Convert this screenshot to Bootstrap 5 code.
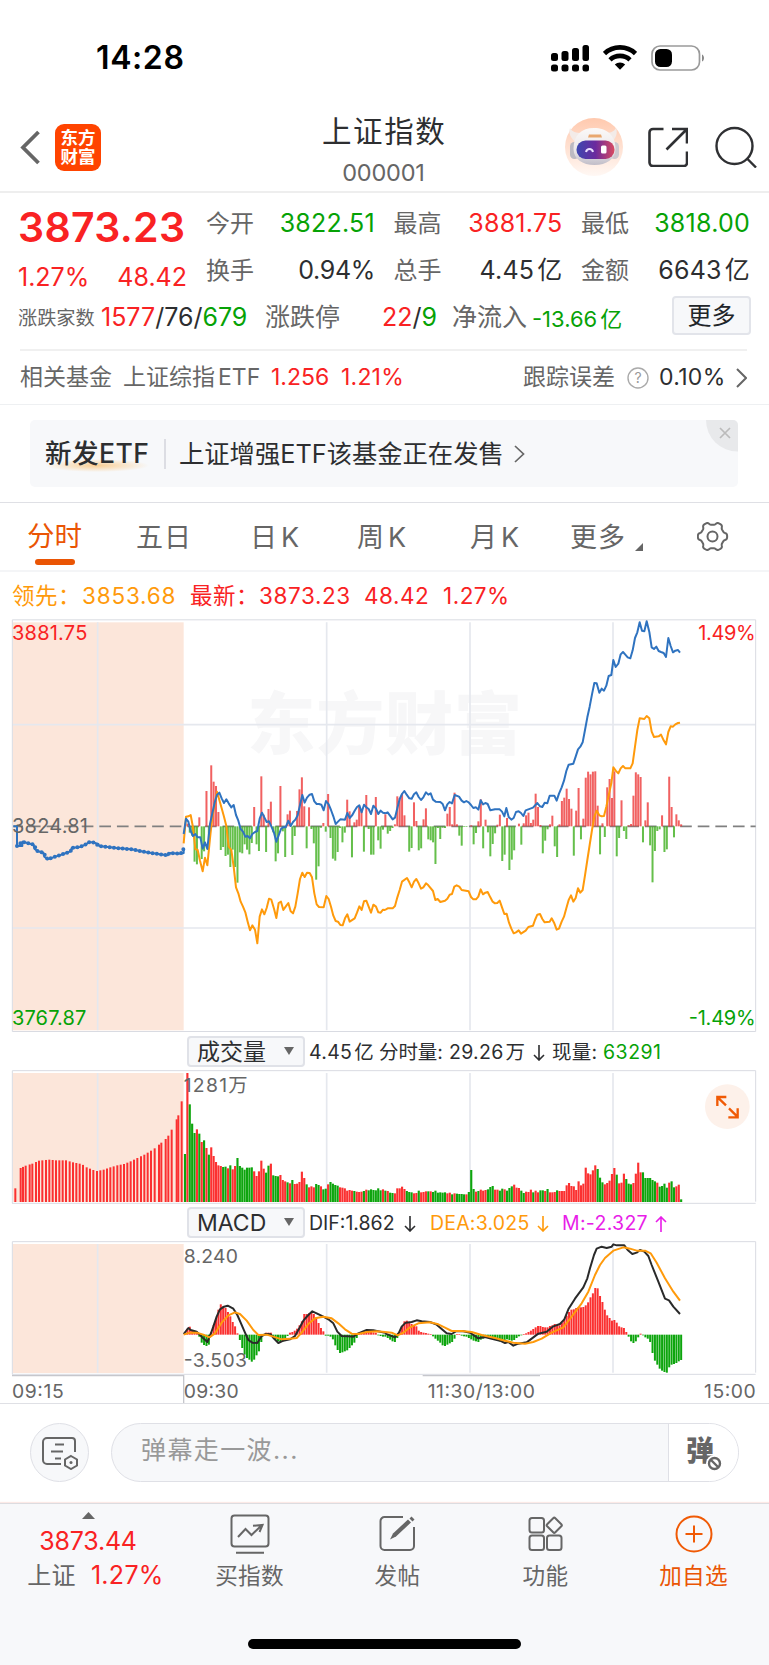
<!DOCTYPE html>
<html lang="zh-CN">
<head>
<meta charset="utf-8">
<meta name="viewport" content="width=device-width, initial-scale=1">
<title>上证指数 000001</title>
<link href="https://cdn.jsdelivr.net/npm/bootstrap@5.3.0/dist/css/bootstrap.min.css" rel="stylesheet">
<style>
:root{--up:#f92223;--down:#06a206;--ink:#2d2e30;--mute:#666;--brand:#ea5504;--amber:#ff9a0b;--line:#e3e5ea;--soft:#f7f8fa}
body{font-family:Inter,"Noto Sans CJK SC",sans-serif;width:769px;margin:0;background:#fff;color:var(--ink);line-height:1;overflow-x:hidden}
svg{display:block;flex:none}
.up{color:var(--up)}.down{color:var(--down)}.mute{color:var(--mute)}.amber{color:var(--amber)}.brand{color:var(--brand)}
.d-flex>span,.cells>span{white-space:nowrap;flex:none}
.cells{display:grid;align-items:center}
.unit{margin-left:3px}
.statusbar{height:110px;padding:5px 64px 0 96px}
.clock{font-size:32px;font-weight:600;color:#000;letter-spacing:.6px}
.titlebar{height:83px;border-bottom:2px solid #eee;padding:0 12px 7px 20px}
.logo{width:46px;height:47px;border-radius:9px;background:#ff4400;color:#fff;font-weight:700;font-size:17.5px;line-height:19px;text-align:center;padding-top:4.500px;margin-left:14px}
.names{width:300px;margin-left:133px;margin-right:31px;gap:14px;padding-top:7px}
.ttl{font-size:29.5px;letter-spacing:1.6px;margin-right:-1.6px}
.code{font-size:23.5px;letter-spacing:-.2px}
.quote{height:156px;padding:7px 18px 0}
.big{font-size:41px;font-weight:600;letter-spacing:.3px}
.n25{font-size:25px}
.wide{letter-spacing:.25px}
.pairs{grid-template-columns:169px 169px 169px;column-gap:18.5px;grid-auto-rows:47px}
.pair{font-size:24px}
.third{height:47px;grid-template-columns:83px 164px 117px 70px 80px 140px 79px}
.morebtn{height:39px;width:79px;border:2px solid #e2e4ea;border-radius:4px;background:var(--soft);font-size:24px;line-height:1;position:relative;top:-2px}
.fund{height:55px;border-top:2px solid #f0f0f0;margin:0 22px 0 20px;font-size:23px;grid-template-columns:103px 148px 70px 182px 104px 32px 77px 10px}
.adwrap{border-top:1px solid #eef0f2;border-bottom:1px solid #dfe0e5;height:99px;padding:15px 31px 0 30px}
.ad{height:67px;border-radius:5px;background:var(--soft);padding-left:15px;font-size:25.3px;overflow:hidden}
.adtag{position:relative;width:119px;font-size:26.6px;font-weight:500;letter-spacing:.4px}
.adtag i{position:absolute;left:0;top:19px;width:104px;height:13px;background:radial-gradient(closest-side,#fbc47acc,#fbc47a00)}
.tabrow{height:69px;border-bottom:2px solid #f4f5f7;font-size:27px;letter-spacing:1px;grid-template-columns:109px 114px 107px 113px 100px 65px 60px;padding:1px 0 0 27px}
.tabrow .k{margin-left:3px}
.tabrow .active::after{content:"";position:absolute;left:8px;top:36px;width:40px;height:6px;border-radius:3px;background:var(--brand)}
.legend-row{height:47px;padding:2px 0 0 12px;font-size:22.5px;letter-spacing:.5px;grid-template-columns:70px 108px 69px 105px 79px 70px}
.sub{height:38px;padding-left:187px;font-size:19.5px}
.pick{width:118px;height:31px;border:2px solid #e0e2e8;border-radius:4px;background:var(--soft);font-size:23px;padding:2px 9px 0 8px}
.sub .cells{padding-top:3px}
.caret{width:0;height:0;border:5px solid transparent;border-top:8px solid #666;border-bottom:0;margin-top:-3px}
.axis{height:29px;border-bottom:1px solid #dfe0e5}
.say{height:99px;padding:0 30px 2px}
.round{width:59px;height:59px;border:1px solid #dfe0e6;border-radius:50%;background:var(--soft)}
.pill{height:59px;width:628px;border:1px solid #dfe0e6;border-radius:30px;background:var(--soft);overflow:hidden;margin-left:22px}
.pill .txt{width:557px;padding:0 0 4px 29px;font-size:25px;color:#999;letter-spacing:1.4px}
.pill .tog{background:#fff;border-left:1px solid #dfe0e6;height:100%;width:70px;padding:0 0 4px 17px}
.dock{height:163px;background:var(--soft);border-top:1px solid #dcdce0;box-shadow:0 -1px 1px #fbe9e6;font-size:22.6px;letter-spacing:.3px;position:relative;grid-template-columns:176px 147px 149px 147px 149px}
.dockitem{height:100px}
.home{position:absolute;left:248px;top:135px;width:273px;height:10px;border-radius:5px;background:#000}
svg text{font-family:Inter,"Noto Sans CJK SC",sans-serif}
</style>
</head>
<body>
<header>
  <div class="statusbar d-flex align-items-center">
    <span class="clock me-auto">14:28</span>
    <svg width="39" height="28" viewBox="0 0 39 28"><g><rect x="0" y="9" width="7" height="8" rx="2.5"/><rect x="10.5" y="7" width="7" height="10" rx="2.5"/><rect x="21" y="4" width="7" height="13" rx="2.5"/><rect x="31.500" y="1" width="6.500" height="16" rx="2.500"/><rect x="0" y="20.500" width="7" height="7" rx="2.500"/><rect x="10.500" y="20.500" width="7" height="7" rx="2.500"/><rect x="21" y="20.500" width="7" height="7" rx="2.500"/><rect x="31.500" y="20.500" width="6.500" height="7" rx="2.500"/></g></svg>
    <svg style="margin-left:13px;margin-right:14px" width="34" height="25" viewBox="0 0 34 25"><g fill="none" stroke="#000" stroke-width="4.600"><path d="M1.500 8.500C10 .300 24 .300 32.500 8.500"/><path d="M7 14.800c5.500-5.300 14.500-5.300 20 0"/></g><path d="M11.800 19.500c2.700-2.800 7.700-2.800 10.400 0L17 24.800z"/></svg>
    <svg width="54" height="26" viewBox="0 0 54 26"><rect x="1" y="1" width="47.500" height="24" rx="8" fill="none" stroke="#9a9a9a" stroke-width="1.700"/><rect x="4" y="4" width="17" height="18" rx="5.500"/><path d="M51 9.500c2.700 1 2.700 6 0 7z" fill="#888"/></svg>
  </div>
  <div class="titlebar d-flex align-items-center">
    <svg width="21" height="36" viewBox="0 0 21 36" fill="none" stroke="#666" stroke-width="3.800"><path d="M18.500 3 3 18.500 18.500 34"/></svg>
    <div class="logo">东方<br>财富</div>
    <div class="names d-flex flex-column align-items-center">
      <span class="ttl">上证指数</span><span class="code mute">000001</span>
    </div>
    <svg width="60" height="60" viewBox="0 0 60 60">
      <defs><linearGradient id="halo" x2="0" y2="1"><stop stop-color="#ffc9ae"/><stop offset="1" stop-color="#fff8f4"/></linearGradient><linearGradient id="visor"><stop stop-color="#3d48b0"/><stop offset=".5" stop-color="#6b2a9e"/><stop offset="1" stop-color="#d94a60"/></linearGradient><linearGradient id="shell" x2="0" y2="1"><stop stop-color="#fbf9f8"/><stop offset=".6" stop-color="#ece8ea"/><stop offset="1" stop-color="#c0bdc8"/></linearGradient></defs>
      <circle cx="30" cy="30" r="29" fill="url(#halo)"/><path d="M6 11c2 4 6 5 12 5l-6 9c-5-3-8-9-6-14zM52 11c-2 4-6 5-11 5l6 9c5-3 7-9 5-14z" fill="#f3ebe8"/>
      <rect x="6" y="25" width="9" height="17" rx="4.500" fill="#bcbac2"/><rect x="46" y="25" width="9" height="17" rx="4.500" fill="#cdc8cf"/>
      <path d="M9.500 32c0-14 8-21 20.500-21s21.500 7 21.500 21c0 10-9 16-21 16s-21-6-21-16z" fill="url(#shell)"/><path d="M25 17.500h12l1 3H24z" fill="#e9a76f"/>
      <rect x="12.500" y="23.500" width="38" height="18.500" rx="9" fill="url(#visor)"/><path d="M22 35c1-4 6-4 7 0" fill="none" stroke="#eadfff" stroke-width="2"/><rect x="37" y="28.500" width="5.500" height="8" rx="1.500" fill="#fff"/>
    </svg>
    <svg style="margin-left:24px" width="40" height="40" viewBox="0 0 40 40" fill="none" stroke="#2f3033" stroke-width="2.600"><path d="M15.500 2H5a3.500 3.500 0 0 0-3.500 3.500v30A3.500 3.500 0 0 0 5 39h31a3 3 0 0 0 3-3V24.500M24 2h15v14.500M39 2 18.500 22.500"/></svg>
    <svg style="margin-left:27px" width="42" height="42" viewBox="0 0 42 42" fill="none" stroke="#2f3033" stroke-width="2.400"><circle cx="19.500" cy="20" r="18"/><path d="M31.500 32 41 41.500"/></svg>
  </div>
</header>

<section class="quote">
  <div class="d-flex">
    <div style="width:188px">
      <div class="big up d-flex align-items-center" style="height:54px"><span>3873.23</span></div>
      <div class="d-flex justify-content-between n25 up align-items-center" style="height:47px;width:169px"><span>1.27%</span><span>48.42</span></div>
    </div>
    <div class="cells pairs">
      <div class="pair d-flex justify-content-between align-items-center"><span class="mute">今开</span><span class="n25 wide down">3822.51</span></div>
      <div class="pair d-flex justify-content-between align-items-center"><span class="mute">最高</span><span class="n25 wide up">3881.75</span></div>
      <div class="pair d-flex justify-content-between align-items-center"><span class="mute">最低</span><span class="n25 wide down">3818.00</span></div>
      <div class="pair d-flex justify-content-between align-items-center"><span class="mute">换手</span><span class="n25" style="letter-spacing:-.3px">0.94%</span></div>
      <div class="pair d-flex justify-content-between align-items-center"><span class="mute">总手</span><span class="n25 wide">4.45<span class="unit">亿</span></span></div>
      <div class="pair d-flex justify-content-between align-items-center"><span class="mute">金额</span><span class="n25 wide">6643<span class="unit">亿</span></span></div>
    </div>
  </div>
  <div class="cells third" style="margin-top:-7px">
    <span class="mute" style="font-size:19.2px;padding-top:3px">涨跌家数</span>
    <span class="n25"><span class="up">1577</span>/76/<span class="down">679</span></span>
    <span class="mute" style="font-size:25px">涨跌停</span>
    <span class="n25"><span class="up">22</span>/<span class="down">9</span></span>
    <span class="mute" style="font-size:25px">净流入</span>
    <span class="down" style="font-size:22px;padding-top:3px">-13.66<span class="unit">亿</span></span>
    <button class="btn p-0 morebtn">更多</button>
  </div>
</section>

<section class="cells fund">
  <span class="mute">相关基金</span><span class="mute">上证综指<span style="margin-left:3px">ETF</span></span><span class="up">1.256</span><span class="up" style="letter-spacing:.2px">1.21%</span><span class="mute">跟踪误差</span>
  <svg width="22" height="22" viewBox="0 0 22 22"><circle cx="11" cy="11" r="10" fill="none" stroke="#aaa" stroke-width="1.400"/><text x="11" y="16" font-size="14" text-anchor="middle" fill="#999">?</text></svg>
  <span style="letter-spacing:.3px">0.10%</span>
  <svg width="11" height="20" viewBox="0 0 11 20" fill="none" stroke="#666" stroke-width="2"><path d="m1 1 9 9-9 9"/></svg>
</section>

<section class="adwrap">
  <div class="ad d-flex align-items-center position-relative">
    <div class="adtag"><i></i><span class="position-relative">新发ETF</span></div>
    <div style="width:2px;height:30px;background:#dcdde3;margin-right:13px"></div>
    <span>上证增强ETF该基金正在发售</span>
    <svg style="margin-left:10px" width="11" height="18" viewBox="0 0 11 18" fill="none" stroke="#666" stroke-width="1.700"><path d="m1 1 8.500 8L1 17"/></svg>
    <svg class="position-absolute top-0 end-0" width="32" height="32" viewBox="0 0 32 32"><path d="M0 0h32v31.500A31.500 31.500 0 0 1 0 0z" fill="#e8e9eb"/><path d="m14 8 10 10m0-10L14 18" stroke="#bbb" stroke-width="1.700"/></svg>
  </div>
</section>

<nav class="cells tabrow mute position-relative">
  <span class="active brand position-relative" style="font-size:27.5px;letter-spacing:0">分时</span><span>五日</span><span>日<span class="k">K</span></span><span>周<span class="k">K</span></span><span>月<span class="k">K</span></span><span>更多</span>
  <svg width="8" height="8" style="margin-top:20px" viewBox="0 0 8 8"><path d="M8 0v8H0z" fill="#666"/></svg>
  <svg class="position-absolute" style="left:697px;top:18px" width="32" height="31" viewBox="0 0 32 31" fill="none" stroke="#666" stroke-width="2"><circle cx="15.500" cy="15.500" r="5"/><path id="gear" stroke-linejoin="round"/></svg>
</nav>

<section class="cells legend-row up">
  <span class="amber">领先：</span><span class="amber" style="letter-spacing:.8px">3853.68</span><span>最新：</span><span style="letter-spacing:.6px">3873.23</span><span>48.42</span><span>1.27%</span>
</section>

<svg id="price" width="769" height="413" viewBox="0 0 2307 1239">
  <text x="742" y="391" font-size="204" font-weight="900" fill="#f7f7f8" textLength="824">东方财富</text>
  <rect x="38" y="10" width="513" height="1224" fill="#fce6da"/>
  <g stroke="#e5e8ee" stroke-width="5" fill="none"><path d="M293 10V1234M980 10V1234M1410 10V1234M1839 10V1234M38 317H2266M38 927H2266"/></g>
  <path d="M37 2.500H2267V1237.500H37z" fill="none" stroke="#d9dbe2" stroke-width="3"/>
  <path d="M40 622H2267" stroke="#808080" stroke-width="5" stroke-dasharray="35 17.800" stroke-dashoffset="6"/>
  <g class="bars" transform="translate(0 622)" opacity=".8"></g>
  <g fill="none" stroke-width="6" stroke-linejoin="round">
    <g transform="translate(0 393)">
      <polyline stroke="#2f73c0" points="40,229 51,229 51,288 67,288 67,275 85,280 101,284 103,296 112,303 130,308 133,320 143,328 160,322 190,312 212,304 215,294 240,291 258,283 266,277 280,277 295,282 298,288 350,294 395,298 430,305 480,313 503,316 508,309 542,311 551,309 551,296"/>
      <polyline stroke="#2f73c0" stroke-width="12" stroke-linecap="round" stroke-dasharray="0 13" points="51,288 67,275 85,280 101,284 112,303 130,308 143,328 160,322 190,312 212,304 215,294 240,291 258,283 266,277 280,277 298,288 350,294 395,298 430,305 480,313 503,316 508,309 542,311 551,296"/>
      <polyline stroke="#ff9a0b" points="551,280 558,200 565,199 572,195 579,232 586,297 593,300 600,332 608,364 615,323 622,346 630,265 637,200 644,165 651,125 658,150 665,175 672,200 679,228 686,290 694,300 701,350 708,412 715,430 722,455 729,470 736,487 743,515 750,541 757,526 765,539 772,580 779,500 786,478 793,493 800,474 807,446 814,449 822,476 829,504 836,459 843,455 850,480 857,470 865,459 872,484 879,490 886,470 893,430 900,387 907,368 914,381 921,368 929,369 936,382 943,430 950,463 957,471 971,472 979,438 986,447 993,470 1000,497 1007,513 1014,515 1021,525 1028,526 1035,505 1042,493 1049,515 1064,505 1071,488 1078,469 1085,480 1092,454 1099,452 1106,470 1113,488 1120,464 1128,470 1135,487 1142,488 1149,479 1156,480"/>
      <polyline stroke="#2f73c0" points="551,252 558,206 565,215 572,243 579,258 586,252 593,262 601,262 608,296 615,277 622,297 630,222 637,190 644,158 651,134 658,128 665,145 672,159 679,148 686,160 694,172 701,165 708,195 715,212 722,237 729,245 736,260 743,258 750,265 757,252 765,246 772,243 779,206 786,188 793,202 800,216 807,214 814,229 822,248 829,275 836,256 843,237 850,231 857,232 865,212 872,228 879,216 886,209 893,196 900,165 907,135 914,158 921,143 929,134 936,132 943,154 950,162 957,162 964,164 971,181 978,153 986,163 993,180 1000,199 1007,222 1014,215 1021,208 1035,209 1042,189 1049,204 1057,195 1064,182 1071,171 1078,166 1085,187 1092,164 1099,172 1106,177 1113,192 1120,167 1128,176 1135,192 1142,182 1149,188 1156,190"/>
    </g>
    <g transform="translate(1155 -27)">
      <polyline stroke="#ff9a0b" points="0,900 8,895 23,895 30,888 37,862 44,840 51,815 66,804 73,817 80,832 87,815 94,807 101,820 108,836 115,832 123,820 130,826 144,843 151,870 158,867 166,876 180,872 187,866 194,854 201,852 208,830 215,826 223,830 230,840 251,844 258,861 265,868 273,868 280,860 287,838 294,853 301,848 308,846 316,862 323,875 330,880 337,879 344,872 351,892 358,912 365,911 372,938 379,956 386,970 393,967 401,961 408,971 422,962 430,951 444,947 450,930 457,914 465,912 472,927 479,937 494,935 500,925 508,940 515,959 522,956 530,935 537,920 544,895 551,870 558,856 565,875 572,864 579,835 586,848 593,840 600,796 607,750 614,705 621,660 628,620 635,602 643,616 650,619 657,618 664,590 671,556 679,520 685,472 692,482 700,490 707,475 714,468 721,475 736,475 743,460 750,410 757,360 764,325 778,327 785,318 793,325 800,365 807,381 821,379 828,374 836,391 843,403 850,366 857,349 864,350 871,343 879,339 885,338"/>
      <polyline stroke="#2f73c0" points="0,610 8,607 15,617 23,628 30,623 37,595 44,567 51,552 58,543 65,554 73,565 80,566 87,553 94,547 101,561 108,570 115,562 123,547 130,554 137,550 144,569 152,575 166,576 173,582 180,601 187,583 194,576 201,580 209,555 222,560 230,572 237,577 244,573 251,577 258,585 265,594 273,592 280,599 287,571 294,583 301,579 308,582 316,601 330,598 344,598 351,605 358,619 364,594 371,621 379,629 386,624 393,606 401,604 408,609 415,618 422,601 436,596 444,593 457,579 465,589 472,591 479,578 487,580 494,557 508,557 515,572 522,551 530,532 537,512 544,483 551,464 565,461 572,440 579,418 586,410 593,397 600,360 607,322 614,290 621,253 628,219 635,220 643,248 650,236 657,242 664,227 671,198 679,195 685,150 692,171 700,161 707,133 714,126 721,134 728,142 736,145 743,121 750,84 757,67 764,37 771,62 778,64 785,34 793,66 800,112 807,117 814,110 821,123 828,126 836,129 843,141 850,84 857,108 864,127 871,122 879,120 885,128"/>
    </g>
  </g>
  <g font-size="60">
    <text x="36" y="62" fill="#f92223" textLength="226">3881.75</text>
    <text x="36" y="642" fill="#666" textLength="228">3824.81</text>
    <text x="36" y="1218" fill="#06a206" textLength="223">3767.87</text>
    <text x="2095" y="62" fill="#f92223" textLength="172">1.49%</text>
    <text x="2066" y="1218" fill="#06a206" textLength="201">-1.49%</text>
  </g>
</svg>

<div class="sub d-flex align-items-center">
  <div class="pick d-flex align-items-center justify-content-between"><span>成交量</span><i class="caret"></i></div>
  <div class="cells" style="margin-left:4px;grid-template-columns:70px 70px 84px 19px 51px 60px;letter-spacing:.3px">
    <span>4.45<span class="unit" style="margin-left:2px">亿</span></span><span style="letter-spacing:-.1px">分时量:</span><span>29.26<span class="unit" style="margin-left:2px">万</span></span>
    <svg width="12" height="16" viewBox="0 0 12 16" fill="none" stroke="#2d2e30" stroke-width="1.600"><path d="M6 0v15M1 10l5 5 5-5"/></svg>
    <span>现量:</span><span class="down" style="letter-spacing:.5px">63291</span>
  </div>
</div>
<svg id="volume" width="769" height="134" viewBox="0 0 2307 402">
  <rect x="38" y="9" width="513" height="387" fill="#fce6da"/>
  <path d="M293 9V395M980 9V395M1410 9V395M1839 9V395" stroke="#e5e8ee" stroke-width="5"/>
  <path d="M37 400V2H2267V395M36 400H2267" fill="none" stroke="#d9dbe2" stroke-width="3"/>
  <g class="bars" transform="translate(0 396)"></g>
  <text x="551" y="65" font-size="58" fill="#666" textLength="192">1281万</text>
  <circle cx="2182" cy="110" r="67" fill="#fdf1ea"/>
  <g fill="none" stroke="#f05a05" stroke-width="7"><path d="M2179 81H2152V108M2153 82L2178 106M2185 142H2213V115M2212 140L2187 115"/></g>
</svg>

<div class="sub d-flex align-items-center" style="height:37px">
  <div class="pick d-flex align-items-center justify-content-between"><span>MACD</span><i class="caret"></i></div>
  <div class="cells" style="margin-left:4px;grid-template-columns:95px 26px 107px 25px 93px 20px">
    <span>DIF:1.862</span>
    <svg width="12" height="16" viewBox="0 0 12 16" fill="none" stroke="#2d2e30" stroke-width="1.600"><path d="M6 0v15M1 10l5 5 5-5"/></svg>
    <span class="amber" style="letter-spacing:.2px">DEA:3.025</span>
    <svg width="12" height="16" viewBox="0 0 12 16" fill="none" stroke="#ff9a0b" stroke-width="1.600"><path d="M6 0v15M1 10l5 5 5-5"/></svg>
    <span style="color:#e81de8;letter-spacing:.3px">M:-2.327</span>
    <svg width="12" height="16" viewBox="0 0 12 16" fill="none" stroke="#e81de8" stroke-width="1.600"><path d="M6 16V1M1 6l5-5 5 5"/></svg>
  </div>
</div>
<svg id="macd" width="769" height="134" viewBox="0 0 2307 402">
  <rect x="38" y="9" width="513" height="387" fill="#fce6da"/>
  <path d="M293 9V395M980 9V395M1410 9V395M1839 9V395" stroke="#e5e8ee" stroke-width="5"/>
  <path d="M37 400V2H2267V395M36 400H2267" fill="none" stroke="#d9dbe2" stroke-width="3"/>
  <g class="bars" transform="translate(0 281)"></g>
  <g fill="none" stroke-width="6" stroke-linejoin="round">
    <g transform="translate(0 -633)">
      <polyline stroke="#2a2a2a" points="551,912 565,894 572,900 590,905 610,925 622,936 632,912 640,890 650,860 660,838 672,830 683,827 700,836 712,855 722,878 735,908 745,930 757,938 772,939 785,918 797,912 812,913 822,926 835,939 850,932 870,928 885,918 898,895 910,872 925,855 937,844 950,850 970,860 985,868 1000,880 1012,905 1025,918 1045,919 1060,920 1075,910 1100,900 1120,901 1155,908"/>
      <polyline stroke="#ff9a0b" points="551,914 570,908 590,908 610,914 628,922 645,910 665,878 685,856 705,847 720,852 740,872 760,900 775,915 800,914 820,920 845,928 870,926 890,924 905,908 925,882 945,865 970,860 995,865 1015,880 1035,898 1055,911 1075,912 1100,906 1130,904 1155,906"/>
    </g>
    <g transform="translate(1155 -633)">
      <polyline stroke="#2a2a2a" points="0,910 15,916 30,922 42,908 50,890 62,878 80,876 95,871 110,874 135,876 155,884 170,897 185,910 200,912 215,903 235,904 255,908 280,925 300,921 320,926 345,932 360,939 370,936 385,947 400,941 425,937 440,926 460,911 485,905 505,889 525,882 538,868 550,838 570,806 595,772 607,745 615,715 627,675 635,656 650,650 665,654 680,650 685,643 695,646 718,646 728,660 742,672 755,668 765,660 778,665 790,678 800,705 820,755 840,806 852,811 865,830 885,852"/>
      <polyline stroke="#ff9a0b" points="0,906 20,908 38,916 55,908 75,892 100,880 135,877 160,883 180,893 200,903 230,903 260,906 290,915 330,924 360,932 385,938 420,941 445,936 470,926 500,908 535,892 560,860 590,820 610,785 630,735 645,705 660,684 685,662 715,652 735,656 755,662 780,662 797,670 815,698 840,745 865,785 885,812"/>
    </g>
  </g>
  <text x="551" y="67" font-size="58" fill="#666" textLength="163">8.240</text>
  <text x="551" y="377" font-size="58" fill="#666" textLength="190">-3.503</text>
</svg>
<div class="axis">
<svg width="769" height="28" viewBox="0 0 2307 84">
  <path d="M36 2H551V84M1268 2H1620" fill="none" stroke="#c6c7cc" stroke-width="4"/>
  <g font-size="58" fill="#666"><text x="36" y="69" textLength="155">09:15</text><text x="551" y="69" textLength="165">09:30</text><text x="1283" y="69" textLength="322">11:30/13:00</text><text x="2112" y="69" textLength="155">15:00</text></g>
</svg>
</div>

<section class="say d-flex align-items-center">
  <div class="round d-flex align-items-center justify-content-center">
    <svg width="36" height="34" viewBox="0 0 36 34" fill="none" stroke="#666" stroke-width="2"><path d="M19 28H5a4 4 0 0 1-4-4V6a4 4 0 0 1 4-4h25a3 3 0 0 1 3 3v11M13 8.500h9M9 15.500h12M13 22.500h6"/><path d="m29 20 6 3.500v6L29 33l-6-3.500v-6z"/><circle cx="29" cy="26.500" r="1.500" fill="#666" stroke="none"/></svg>
  </div>
  <div class="pill d-flex align-items-center">
    <div class="txt">弹幕走一波...</div>
    <div class="tog d-flex align-items-center position-relative">
      <span style="font-size:28px;font-weight:900;color:#666">弹</span>
      <svg class="position-absolute" style="left:37px;top:31px" width="17" height="17" viewBox="0 0 17 17"><circle cx="8.500" cy="8.500" r="8.500" fill="#fff"/><circle cx="8.500" cy="8.500" r="5.500" fill="none" stroke="#666" stroke-width="2.400"/><path d="m5 5 7 7" stroke="#666" stroke-width="2.400"/></svg>
    </div>
  </div>
</section>

<footer class="cells dock mute align-items-start">
  <div class="dockitem d-flex flex-column align-items-center">
    <svg style="margin-top:8px" width="13" height="7" viewBox="0 0 13 7"><path d="M6.500 0 13 7H0z" fill="#666"/></svg>
    <span class="up n25" style="margin-top:10px;letter-spacing:-.2px">3873.44</span>
    <span style="margin:9px 0 0 15px;font-size:24px">上证<span class="up n25" style="margin-left:15px">1.27%</span></span>
  </div>
  <div class="dockitem d-flex flex-column align-items-center">
    <svg style="margin-top:10px" width="40" height="40" viewBox="0 0 40 40" fill="none" stroke="#666" stroke-width="2"><rect x="1.500" y="1.500" width="37" height="31" rx="3"/><path d="m8 23 7.500-8 6 6L32 11m-9 .8L32.500 11l-3 7M6 38.700h28"/></svg>
    <span style="margin-top:11px">买指数</span>
  </div>
  <div class="dockitem d-flex flex-column align-items-center">
    <svg style="margin-top:11px" width="37" height="37" viewBox="0 0 37 37" fill="none" stroke="#666" stroke-width="2"><path d="M24 2H5.500A4 4 0 0 0 1.500 6v25a4 4 0 0 0 4 4H31a4 4 0 0 0 4-4V12"/><path d="m11 24.500 3-6L29 4.500l3 3L17 21.500z" fill="#666" stroke="none"/><path d="m30.500 3.500 2-2 3 3-2 2z" fill="#666" stroke="none"/></svg>
    <span style="margin-top:13px">发帖</span>
  </div>
  <div class="dockitem d-flex flex-column align-items-center">
    <svg style="margin-top:12px" width="35" height="36" viewBox="0 0 35 36" fill="none" stroke="#666" stroke-width="2"><rect x="1.500" y="2" width="14.500" height="14.500" rx="2.500"/><rect x="1.500" y="19.500" width="14.500" height="14.500" rx="2.500"/><rect x="19" y="19.500" width="14.500" height="14.500" rx="2.500"/><rect x="20.500" y="3.500" width="11.500" height="11.500" rx="1.500" transform="rotate(45 26.250 9.250)"/></svg>
    <span style="margin-top:13px">功能</span>
  </div>
  <div class="dockitem d-flex flex-column align-items-center brand">
    <svg style="margin-top:11px" width="38" height="38" viewBox="0 0 38 38" fill="none" stroke="#f05a05" stroke-width="2"><circle cx="19" cy="19" r="17.500"/><path d="M19 10.500v17M10.500 19h17"/></svg>
    <span style="margin-top:12px">加自选</span>
  </div>
  <div class="home"></div>
</footer>

<script src="https://cdn.jsdelivr.net/npm/bootstrap@5.3.0/dist/js/bootstrap.bundle.min.js"></script>
<script>
const RED = '#fb3030', GREEN = '#0da50d', STEP = 7.156, FIRST = 555;
const NS = 'http://www.w3.org/2000/svg';
function bar(g, x, y, w, h, fill) {
  const r = document.createElementNS(NS, 'rect');
  Object.entries({x: x - w / 2, y, width: w, height: h, fill}).forEach(([k, v]) => r.setAttribute(k, v));
  g.appendChild(r);
}
// one value per minute: positive grows up in red, negative grows down in green
function signed(sel, data, up, down) {
  const g = document.querySelector(sel + ' .bars');
  data.forEach((v, i) => bar(g, FIRST + i * STEP, v > 0 ? -v : 0, 6, Math.abs(v), v > 0 ? up : down));
}
signed('#price', [0,8,-19,-28,-106,-114,27,-98,-75,106,-40,183,134,121,43,-71,-62,-89,-85,-122,-70,-122,-169,-78,-81,-54,-70,-84,-50,58,-54,-74,150,35,-77,52,74,-18,-105,-81,121,-15,-92,36,47,-86,-29,46,111,147,60,-66,57,-8,-51,-160,-120,-4,10,-16,97,-35,-97,-103,-77,-5,-48,-19,80,45,-93,12,20,62,48,-76,94,-8,-85,-85,88,-42,-67,-10,36,-22,-14,-5,6,90,85,98,33,0,-76,-65,72,16,-72,-66,21,54,-39,-42,-48,-113,-5,-38,-4,-5,38,58,6,101,6,-28,-58,-2,-2,0,3,-54,-20,15,81,-66,20,-18,-90,-53,-21,5,35,-104,-85,25,-131,-100,-72,0,8,-55,9,33,41,10,20,98,58,4,-81,-43,-9,6,32,-60,-92,6,76,86,113,82,53,-88,47,115,-39,23,146,164,156,164,165,62,-84,9,-32,117,142,85,165,-90,-35,78,-14,-38,3,7,92,162,156,148,-48,18,72,-57,-168,-74,-14,-9,33,-77,-69,149,58,-33,36,18,6], '#ee3a3a', '#3fb01f');
signed('#macd', [5,18,24,12,8,5,-6,-24,-31,-34,-30,8,28,50,75,91,85,80,68,55,38,25,4,-16,-40,-60,-70,-75,-81,-75,-62,-50,-22,2,6,6,6,-4,-15,-20,-22,-20,-12,-4,6,8,12,18,28,40,62,62,64,66,62,50,35,20,10,-3,-3,-6,-14,-32,-46,-55,-53,-50,-47,-40,-32,-24,-10,2,6,8,8,8,8,7,6,-2,-4,-6,-6,-10,-15,-20,-22,-10,10,25,40,42,38,32,28,25,12,8,6,5,3,2,-5,-12,-18,-24,-32,-34,-30,-26,-22,-12,2,2,-3,-5,-6,-10,-14,-18,-20,-22,-15,-12,-10,-8,-8,-10,-14,-18,-20,-20,-16,-14,-16,-18,-16,-10,-5,-2,2,4,8,12,17,22,26,26,23,22,22,26,28,32,30,28,35,45,57,68,75,76,80,83,82,83,88,97,112,124,140,139,116,98,75,58,50,42,44,36,25,22,20,8,-6,-20,-25,-20,-8,3,-2,-8,-12,-22,-55,-78,-90,-102,-108,-112,-114,-98,-90,-88,-85,-80,-76], RED, GREEN);

// volume per minute, the letter is the colour of the bar
const vol = 'g144 r387 g293 g235 g207 r218 g205 r180 g185 r162 g142 r164 r138 r120 r110 r108 g105 g106 r101 g110 r98 r108 g132 g108 g103 g97 g103 g103 g104 r92 r78 r92 r124 r100 g88 g109 r115 g80 g78 g77 r81 r66 r62 g59 r56 g66 r54 r55 r60 r91 r72 g53 r44 r47 r44 g54 g51 r47 g38 g40 r53 g60 g55 g51 g49 r44 r43 r41 r34 r36 r34 g33 r31 r30 r31 g33 r37 g35 g38 g36 g35 g41 g35 r38 g34 r33 g28 g27 r26 r41 r41 r46 r39 g33 g30 g29 r26 r27 g34 r29 r30 r32 g32 r32 g30 g34 g28 g29 g28 g29 r26 r28 g23 r26 g25 g24 g24 g23 r23 g30 g96 g39 r31 g33 r37 r34 r36 g38 g45 g48 r37 r37 g34 g40 r38 g34 g42 g47 r52 r43 r42 g34 g27 r31 r30 r37 g29 r34 r29 g35 g35 r33 g39 r29 r29 r30 g35 r33 r33 r33 r50 r57 r48 r47 r36 r62 r50 r55 r103 r86 r83 r95 r110 g99 g73 g59 r53 r57 r64 r84 r102 g82 r56 r58 r85 g69 g55 g53 r57 r85 r118 r89 g89 g72 g72 g72 g66 g62 r58 g46 g48 g55 g43 r58 g62 g44 r47 r52 g8'.split(' ');
const vg = document.querySelector('#volume .bars');
const shift = vol.length - 209;
vol.forEach((s, i) => {
  const k = i > 125 ? i - shift : i, h = +s.slice(1);
  bar(vg, FIRST + k * STEP, -h, 6.4, h, s[0] === 'r' ? RED : GREEN);
});
// opening auction: bar centres and the outline that their heights follow
const at = [46,62,69,77,89,97,108,117,127,138,148,158,168,178,188,198,209,219,229,239,249,260,270,280,291,301,311,321,331,341,352,362,372,382,392,402,412,423,433,443,453,464,477,484,497,505,515,530,535,545];
const outline = [[46,41],[61,41],[62,102],[77,109],[97,115],[117,124],[148,127],[168,125],[198,125],[219,119],[239,115],[250,111],[260,104],[280,96],[291,93],[311,97],[331,104],[352,110],[372,114],[392,122],[412,132],[433,142],[453,154],[464,161],[477,172],[484,178],[497,189],[505,199],[515,217],[530,248],[535,260],[545,302],[999,302]];
at.forEach(x => {
  const j = outline.findIndex(p => p[0] > x), [a, b] = outline[j - 1], [c, d] = outline[j];
  const h = b + (d - b) * (x - a) / (c - a);
  bar(vg, x, -h, 6, h, RED);
});
// gear outline with six soft teeth
let d = '';
for (let t = 0; t <= 180; t++) {
  const a = t / 180 * Math.PI * 2, r = 13.2 + 1.500 * Math.tanh(2 * Math.cos(6 * a));
  d += (t ? 'L' : 'M') + (15.5 + r * Math.cos(a)).toFixed(2) + ' ' + (15.5 + r * Math.sin(a)).toFixed(2);
}
document.getElementById('gear').setAttribute('d', d + 'z');
</script>
</body>
</html>
